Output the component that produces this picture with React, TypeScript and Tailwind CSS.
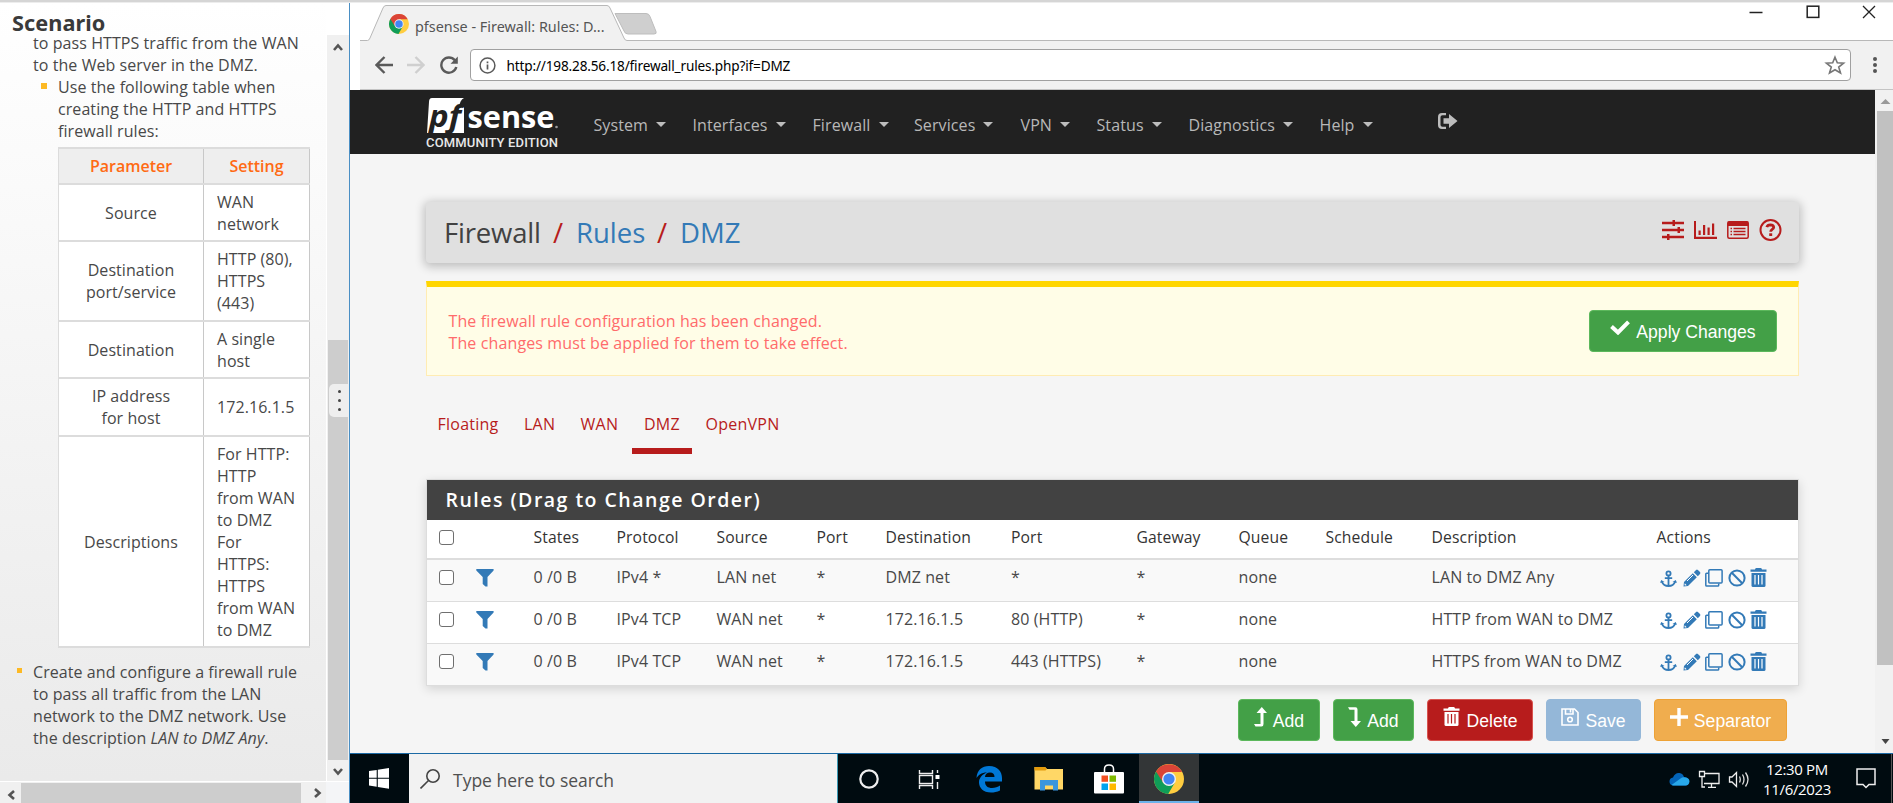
import React from 'react';

const openSans = "font-['Open_Sans','Noto_Sans',sans-serif]";
const arial = "font-['Liberation_Sans',Arial,sans-serif]";

function ChromeLogo({ size }: { size: number }) {
  return (
    <svg width={size} height={size} viewBox="0 0 30 30" className="block shrink-0">
      <circle cx="15" cy="15" r="15" fill="#ffcd40" />
      <path d="M15 15 L2.0 7.5 A15 15 0 0 0 14.2 30 L20.9 18.4 Z" fill="#0f9d58" />
      <path d="M2 7.5 A15 15 0 0 1 28.1 8 L15 8 L9 18.4 Z" fill="#db4437" />
      <circle cx="15" cy="15" r="7" fill="#f1f1f1" />
      <circle cx="15" cy="15" r="5.6" fill="#4285f4" />
    </svg>
  );
}

function AnchorIcon() {
  return (
    <svg width="17" height="18" viewBox="0 0 17 18" fill="none" stroke="#337ab7" strokeWidth="1.8">
      <circle cx="8.5" cy="3.4" r="2.1" />
      <path d="M8.5 5.5V16M4.8 8.2h7.4" />
      <path d="M1.8 11.6C3 14.500 5.500 16 8.500 16S14 14.500 15.200 11.600" />
      <path d="M0 12.800L1.300 10l3.200 2zM17 12.800L15.700 10l-3.200 2z" fill="#337ab7" stroke="none" />
    </svg>
  );
}

function PencilIcon() {
  return (
    <svg width="18" height="18" viewBox="0 0 18 18">
      <path d="M0.500 17.500L1 13L9.800 4.200L13.800 8.200L5 17Z" fill="#337ab7" />
      <path d="M10.800 3.200L13.100 0.900Q14 0.200 14.900 1L17 3.100Q17.800 4 17 4.900L14.800 7.200Z" fill="#337ab7" />
      <path d="M4 12L10 6" stroke="#fff" strokeWidth="1" />
      <path d="M1.800 14.300L3.700 16.200L2 16.500L1.500 16Z" fill="#fff" />
    </svg>
  );
}

function CloneIcon() {
  return (
    <svg width="18" height="18" viewBox="0 0 18 18" fill="none" stroke="#337ab7" strokeWidth="1.500">
      <rect x="3.800" y="0.800" width="13.300" height="13.300" rx="1" />
      <path d="M3.500 4.200H1.600Q0.800 4.200 0.800 5V16.200Q0.800 17.100 1.600 17.100H12.800Q13.700 17.100 13.700 16.300V14.500" />
    </svg>
  );
}

function BanIcon() {
  return (
    <svg width="18" height="18" viewBox="0 0 18 18" fill="none" stroke="#337ab7" strokeWidth="2">
      <circle cx="9" cy="9" r="7.600" />
      <path d="M3.800 3.800L14.200 14.200" />
    </svg>
  );
}

function TrashIcon({ color, bar }: { color: string; bar: string }) {
  return (
    <svg width="17" height="19" viewBox="0 0 17 19">
      <path d="M5 1.500Q5 0 6.300 0H10.700Q12 0 12 1.500H16.500V3.800H0.500V1.500Z" fill={color} />
      <path d="M1.500 5H15.500V17.500Q15.500 19 14 19H3Q1.500 19 1.500 17.500Z" fill={color} />
      <path d="M5 7V16.500M8.500 7V16.500M12 7V16.500" stroke={bar} strokeWidth="1.200" />
    </svg>
  );
}

function FilterIcon() {
  return (
    <svg width="18" height="18" viewBox="0 0 18 18">
      <path d="M0.300 0H17.600V1.500L11.500 8V17.500H9.500L6.700 15V8L0.300 1.500Z" fill="#337ab7" />
    </svg>
  );
}

function Checkbox() {
  return <div className="ml-px size-[15px] rounded-[3px] border border-[#6f6f6f] bg-white" />;
}

const params: { name: string[]; value: string[]; h: string }[] = [
  { name: ['Source'], value: ['WAN', 'network'], h: 'h-[57px]' },
  { name: ['Destination', 'port/service'], value: ['HTTP (80),', 'HTTPS', '(443)'], h: 'h-[80px]' },
  { name: ['Destination'], value: ['A single', 'host'], h: 'h-[57px]' },
  { name: ['IP address', 'for host'], value: ['172.16.1.5'], h: 'h-[58px]' },
  {
    name: ['Descriptions'],
    value: ['For HTTP:', 'HTTP', 'from WAN', 'to DMZ', 'For', 'HTTPS:', 'HTTPS', 'from WAN', 'to DMZ'],
    h: 'h-[211px]',
  },
];

function Lines({ lines }: { lines: string[] }) {
  return (
    <div>
      {lines.map((l, i) => (
        <div key={i} className="whitespace-nowrap">{l}</div>
      ))}
    </div>
  );
}

function Chevron({ d, className }: { d: string; className?: string }) {
  return (
    <svg width="10" height="10" viewBox="0 0 10 10" fill="none" stroke="#555" strokeWidth="2.600" className={className}>
      <path d={d} />
    </svg>
  );
}

function ScenarioPanel() {
  return (
    <div className="flex h-[800px] w-[349px] shrink-0 flex-col">
      <div className="flex min-h-0 flex-1">
        <div className={`${openSans} flex h-[778px] w-[326px] flex-col overflow-hidden bg-linear-to-b from-white to-[#eaeaea] text-[16px] leading-[22px] tracking-[0.070px] text-[#484848]`}>
          <h1 className="h-[30px] shrink-0 pt-[10px] pl-[12px] font-['Noto_Sans',sans-serif] text-[21.700px] leading-[20px] font-bold text-[#3a3a3a]">Scenario</h1>
          <div className="-mt-px pl-[33px]">
            <div className="whitespace-nowrap">to pass HTTPS traffic from the WAN</div>
            <div className="whitespace-nowrap">to the Web server in the DMZ.</div>
            <div className="flex">
              <div className="mt-[7px] mr-[11px] ml-[8px] size-[6px] shrink-0 bg-[#fdb924]" />
              <Lines lines={['Use the following table when', 'creating the HTTP and HTTPS', 'firewall rules:']} />
            </div>
            <div className="mt-[5px] ml-[25px] w-[252px] border-t-2 border-l border-[#dcdcdc] bg-white">
              <div className="flex h-[36px] border-b-2 border-[#dcdcdc] bg-[#eeeeee] font-semibold tracking-normal text-[#ff6a13]">
                <div className="flex w-[145px] items-center justify-center border-r border-[#c8c8c8]">Parameter</div>
                <div className="flex flex-1 items-center justify-center border-r border-[#c8c8c8]">Setting</div>
              </div>
              {params.map((p) => (
                <div key={p.name[0] + p.h} className={`flex ${p.h} border-b-2 border-[#dcdcdc]`}>
                  <div className="flex w-[145px] items-center justify-center border-r border-[#c8c8c8] text-center">
                    <Lines lines={p.name} />
                  </div>
                  <div className="flex flex-1 items-center border-r border-[#c8c8c8] pl-[13px]">
                    <Lines lines={p.value} />
                  </div>
                </div>
              ))}
            </div>
            <div className="mt-[13px] -ml-[16px] flex">
              <div className="mt-[7px] mr-[11px] size-[5px] shrink-0 bg-[#fdb924]" />
              <div className="whitespace-nowrap">
                Create and configure a firewall rule
                <br />
                to pass all traffic from the LAN
                <br />
                network to the DMZ network. Use
                <br />
                the description <i>LAN to DMZ Any</i>.
              </div>
            </div>
          </div>
        </div>
        <div className="flex h-[778px] w-[23px] flex-col">
          <div className="h-[32px] bg-white" />
          <div className="relative flex flex-1 flex-col items-center border-l border-white bg-[#f0f0f0]">
            <Chevron d="M1 8L5 3.500L9 8" className="mt-[7px]" />
            <div className="mt-[288px] h-[420px] w-[20px] bg-[#cdcdcd]" />
            <Chevron d="M1 2L5 6.500L9 2" className="mt-[7px]" />
            <div className="absolute top-[349px] left-[2px] flex h-[33px] w-[19px] flex-col items-center justify-center gap-[6px] rounded-l-[5px] bg-[#eeeeee] pl-[2px]">
              <i className="size-[3px] rounded-full bg-[#444]" />
              <i className="size-[3px] rounded-full bg-[#444]" />
              <i className="size-[3px] rounded-full bg-[#444]" />
            </div>
          </div>
        </div>
      </div>
      <div className="flex h-[22px] shrink-0 items-center border-t border-white bg-[#f0f0f0]">
        <Chevron d="M8 1L3.500 5L8 9" className="mx-[6px] mt-[5px]" />
        <div className="ml-[-1px] h-[20px] w-[280px] bg-[#cdcdcd]" />
        <Chevron d="M2 1L6.500 5L2 9" className="ml-[12px]" />
        <div className="ml-auto h-full w-[23px] bg-[#f4f5f7]" />
      </div>
    </div>
  );
}

function BrowserChrome() {
  return (
    <>
      <div className="relative h-[38px] shrink-0 bg-white">
        <svg width="1543" height="38" viewBox="0 0 1543 38" className="absolute inset-0">
          <path d="M265 10.500h31q3 0 4 3l6 15q1 2.500-2 2.500h-26q-3 0-4-3z" fill="#cfcfcf" stroke="#bdbdbd" />
          <path d="M10 37.500H17.500Q19 37.500 20 35L33 5Q34 2.500 36 2.500H257Q259 2.500 260 5L274 35Q275 37.500 277 37.500H1543V38H10Z" fill="#f1f1f1" />
          <path d="M10 37.500H17.500Q19 37.500 20 35L33 5Q34 2.500 36 2.500H257Q259 2.500 260 5L274 35Q275 37.500 277 37.500H1543" fill="none" stroke="#b8b8b8" />
          <g fill="none" stroke="#222" strokeWidth="1.500">
            <path d="M1399.500 9.500H1412.500" />
            <rect x="1457.200" y="3.200" width="11.600" height="11.200" />
            <path d="M1513 3L1525 15M1525 3L1513 15" strokeWidth="1.300" />
          </g>
        </svg>
        <div className="relative flex h-full items-center pt-[4px] pl-[39px]">
          <div className="-mt-[1px]"><ChromeLogo size={20} /></div>
          <span className="ml-[6px] pt-[5px] font-['Noto_Sans',sans-serif] text-[14.400px] text-[#555]">pfsense - Firewall: Rules: D...</span>
        </div>
      </div>
      <div className="ml-[10px] flex h-[49px] shrink-0 items-center border-b border-[#c4c4c4] bg-[#f1f1f1]">
        <svg width="18" height="18" viewBox="0 0 18 18" className="ml-[15px]" fill="none" stroke="#5a5a5a" strokeWidth="2.400">
          <path d="M18 9H2M9.500 1L1.500 9L9.500 17" />
        </svg>
        <svg width="18" height="18" viewBox="0 0 18 18" className="ml-[14px]" fill="none" stroke="#cfcfcf" strokeWidth="2.400">
          <path d="M0 9H16M8.500 1L16.500 9L8.500 17" />
        </svg>
        <svg width="18" height="18" viewBox="0 0 18 18" className="ml-[15px]">
          <path d="M14.800 4.200A7.600 7.600 0 1 0 16.300 11" fill="none" stroke="#5a5a5a" strokeWidth="2.400" />
          <path d="M17.800 0.500V7.800H10.500Z" fill="#5a5a5a" />
        </svg>
        <div className="ml-[12px] flex h-[32px] w-[1381px] items-center rounded-[4px] border border-[#a0a0a0] bg-white">
          <svg width="17" height="17" viewBox="0 0 17 17" className="ml-[8px]" fill="none" stroke="#5a5a5a" strokeWidth="1.500">
            <circle cx="8.500" cy="8.500" r="7.400" />
            <path d="M8.500 7.500V12.500M8.500 4.500V6.200" strokeWidth="1.700" />
          </svg>
          <span className="ml-[10.500px] pt-[2px] font-['Noto_Sans',sans-serif] text-[13.600px] tracking-[-0.160px] text-black">http://198.28.56.18/firewall_rules.php?if=DMZ</span>
          <svg width="22" height="20" viewBox="0 0 22 20" className="mr-[4px] ml-auto" fill="none" stroke="#777" strokeWidth="1.600">
            <path d="M11 2.200L13.300 7.800L19.600 8.200L14.700 12.100L16.500 18L11 14.700L5.500 18L7.300 12.100L2.400 8.200L8.700 7.800Z" />
          </svg>
        </div>
        <div className="ml-[21.500px] flex flex-col gap-[2px]">
          <i className="size-[4px] rounded-full bg-[#555]" />
          <i className="size-[4px] rounded-full bg-[#555]" />
          <i className="size-[4px] rounded-full bg-[#555]" />
        </div>
      </div>
    </>
  );
}

const menu: [string, string][] = [
  ['System', 'w-[99px]'],
  ['Interfaces', 'w-[120px]'],
  ['Firewall', 'w-[101.500px]'],
  ['Services', 'w-[106.500px]'],
  ['VPN', 'w-[76px]'],
  ['Status', 'w-[92px]'],
  ['Diagnostics', 'w-[131px]'],
  ['Help', 'w-[118px]'],
];

function Navbar() {
  return (
    <nav className="flex h-[64px] items-center bg-[#212121] pl-[76px]">
      <div className="w-[167.500px] pt-[1px]">
        <svg width="134" height="52" viewBox="0 0 134 52" className="block overflow-visible">
          <path d="M6 1H38Q34 3 33 10H38V36H1L3 5Q3 1 6 1Z" fill="#fff" />
          <text x="3" y="30" className="font-['Open_Sans',sans-serif] text-[30px] font-bold italic" fill="#212121" textLength="32" lengthAdjust="spacingAndGlyphs">pf</text>
          <text x="41.500" y="30.500" className="font-['Open_Sans',sans-serif] text-[31px] font-bold" fill="#fff" textLength="87" lengthAdjust="spacingAndGlyphs">sense</text>
          <circle cx="130.500" cy="30" r="1.300" fill="#999" />
          <text x="0" y="50" className="font-['Roboto',sans-serif] text-[13px] font-medium" fill="#e8e8e8" textLength="132">COMMUNITY EDITION</text>
        </svg>
      </div>
      {menu.map(([label, w]) => (
        <div key={label} className={`${openSans} ${w} flex shrink-0 items-center gap-[8px] pt-[6px] text-[16px] leading-[22px] tracking-[0.100px] text-[#b8b8b8]`}>
          {label}
          <i className="mt-[-2px] h-0 w-0 border-x-[5.500px] border-t-[5.500px] border-x-transparent border-t-[#bdbdbd]" />
        </div>
      ))}
      <svg width="20" height="17" viewBox="0 0 20 17" className="-mt-[2px]" fill="#bdbdbd">
        <path d="M8 0H4Q0 0 0 4V12Q0 16 4 16H8V13.800H4.500Q2.500 13.800 2.500 12V4Q2.500 2.200 4.500 2.200H8Z" />
        <path d="M5.500 5.200H11V1L19.500 8L11 15V10.800H5.500Z" />
      </svg>
    </nav>
  );
}

const colGrid = 'grid grid-cols-[38px_57.500px_83px_100px_100px_69px_125.500px_125.500px_102px_87px_106px_225px_1fr] pl-[11px]';
const heads = ['States', 'Protocol', 'Source', 'Port', 'Destination', 'Port', 'Gateway', 'Queue', 'Schedule', 'Description', 'Actions'];
const rules = [
  ['0 /0 B', 'IPv4 *', 'LAN net', '*', 'DMZ net', '*', '*', 'none', '', 'LAN to DMZ Any'],
  ['0 /0 B', 'IPv4 TCP', 'WAN net', '*', '172.16.1.5', '80 (HTTP)', '*', 'none', '', 'HTTP from WAN to DMZ'],
  ['0 /0 B', 'IPv4 TCP', 'WAN net', '*', '172.16.1.5', '443 (HTTPS)', '*', 'none', '', 'HTTPS from WAN to DMZ'],
];

function RulesTable() {
  return (
    <div className={`${openSans} mt-[25px] w-[1373px] border border-[#ddd] bg-white text-[16px] leading-[22px] tracking-[0.100px] whitespace-nowrap text-[#484848] shadow-[0_3px_10px_rgba(0,0,0,0.14)]`}>
      <div className="flex h-[40px] items-center bg-[#424242] pl-[18.500px] text-[19.500px] font-semibold tracking-[1.480px] text-white">Rules (Drag to Change Order)</div>
      <div className={`${colGrid} h-[40px] border-b-2 border-[#ddd] pt-[6px] text-[15.700px] font-medium tracking-[0.120px] text-[#333]`}>
        <div className="pt-[4px]"><Checkbox /></div>
        <div />
        {heads.map((h, i) => (
          <div key={i}>{h}</div>
        ))}
      </div>
      {rules.map((r, ri) => (
        <div key={ri} className={`${colGrid} h-[42px] border-b border-[#ddd] pt-[6px] last:h-[41px] last:border-b-0 ${ri === 1 ? 'bg-white' : 'bg-[#f9f9f9]'}`}>
          <div className="pt-[4px]"><Checkbox /></div>
          <div className="pt-[3px]"><FilterIcon /></div>
          {r.map((c, i) => (
            <div key={i}>{c}</div>
          ))}
          <div className="flex items-start pt-[3px] pl-[3px]">
            <div className="w-[23px] pt-px"><AnchorIcon /></div>
            <div className="w-[22px]"><PencilIcon /></div>
            <div className="w-[23px]"><CloneIcon /></div>
            <div className="w-[22px]"><BanIcon /></div>
            <div className="-mt-px"><TrashIcon color="#337ab7" bar="#fff" /></div>
          </div>
        </div>
      ))}
    </div>
  );
}

function Button({ icon, label, className }: { icon: React.ReactNode; label: string; className: string }) {
  return (
    <button className={`${arial} flex h-[42px] shrink-0 items-center justify-center rounded-[4px] border text-[17.600px] leading-none text-white ${className}`}>
      <span className="-mt-[7px] block">{icon}</span>
      <span className="mt-[3px]">{label}</span>
    </button>
  );
}

function Page() {
  return (
    <div className="flex min-h-0 flex-1">
      <div className="flex w-[1525px] shrink-0 flex-col overflow-hidden bg-[#f5f5f5]">
        <Navbar />
        <main className="pt-[48px] pl-[76px]">
          <div className={`${openSans} flex h-[61px] w-[1373px] items-center rounded-[4px] bg-[#e0e0e0] pr-[17px] pl-[18px] text-[27.500px] text-[#424242] shadow-[0_2px_10px_2px_rgba(0,0,0,0.22)]`}>
            <div className="mt-px flex">
              <span className="w-[109px] tracking-[-0.200px]">Firewall</span>
              <span className="w-[23px] text-[#b71c1c]">/</span>
              <span className="w-[81px] text-[#337ab7]">Rules</span>
              <span className="w-[23px] text-[#b71c1c]">/</span>
              <span className="text-[#337ab7]">DMZ</span>
            </div>
            <div className="-mt-[5px] ml-auto flex items-center gap-[10px]">
              <svg width="22" height="20" viewBox="0 0 22 20" fill="#b71c1c">
                <path d="M0 1.700H22V4.200H0ZM0 8.700H22V11.200H0ZM0 15.700H22V18.200H0Z" />
                <path d="M10.500 0H13V6H10.500ZM15.500 7H18V13H15.500ZM5 14H7.500V20H5Z" />
              </svg>
              <svg width="23" height="18" viewBox="0 0 23 18" fill="#b71c1c">
                <path d="M0 0H2V15.800H23V18H0ZM4.500 9.500H6.700V14H4.500ZM9 4H11.200V14H9ZM13.500 6.500H15.700V14H13.500ZM18 2.500H20.200V14H18Z" />
              </svg>
              <svg width="22" height="18" viewBox="0 0 22 18">
                <rect x="0.800" y="0.800" width="20.400" height="16.400" rx="1.500" fill="none" stroke="#b71c1c" strokeWidth="1.500" />
                <path d="M0.800 0.500H21.200V5H0.800Z" fill="#b71c1c" />
                <path d="M3.500 7.500H5M3.500 10.500H5M3.500 13.500H5M6.500 7.500H18.500M6.500 10.500H18.500M6.500 13.500H18.500" stroke="#b71c1c" strokeWidth="1.500" />
              </svg>
              <svg width="23" height="22" viewBox="0 0 23 22" fill="none" stroke="#b71c1c">
                <circle cx="11.500" cy="11" r="10" strokeWidth="2" />
                <path d="M7.800 8.200Q8.500 5.800 11.300 5.800Q14.600 5.900 14.700 8.300Q14.700 9.700 13 10.600Q11.700 11.400 11.700 12.800" strokeWidth="2.800" />
                <path d="M11.700 14.300V17" strokeWidth="3" />
              </svg>
            </div>
          </div>
          <div className={`${openSans} mt-[18px] flex h-[95px] w-[1373px] items-start border border-t-[6px] border-[#ffecb3] border-t-[#ffd600] bg-[#fffde7] pt-[23px] pr-[21px] pl-[21.500px] text-[16px] leading-[22px] tracking-[0.120px] text-[#ff6b6b]`}>
            <div>
              The firewall rule configuration has been changed.
              <br />
              The changes must be applied for them to take effect.
            </div>
            <Button
              className="ml-auto w-[188px] gap-[6px] border-[#5cb85c] bg-[#43a047] tracking-normal"
              label="Apply Changes"
              icon={
                <svg width="20" height="15" viewBox="0 0 20 15" fill="none" stroke="#fff" strokeWidth="4">
                  <path d="M1.500 6.500L8 12.500L18.500 1.800" />
                </svg>
              }
            />
          </div>
          <div className={`${openSans} mt-[37px] flex h-[41px] text-[16px] leading-[22px] tracking-[0.250px] text-[#b71c1c]`}>
            <div className="w-[87px] pl-[11.500px]">Floating</div>
            <div className="w-[56px] pl-[11px]">LAN</div>
            <div className="w-[63px] pl-[11.500px]">WAN</div>
            <div className="w-[60px] border-b-[6px] border-[#b71c1c] pl-[12px]">DMZ</div>
            <div className="pl-[13.500px]">OpenVPN</div>
          </div>
          <RulesTable />
          <div className="mt-[13px] flex gap-[13px] pl-[812px]">
            <Button className="w-[82px] gap-[6px] border-[#5cb85c] bg-[#43a047]" label="Add" icon={
              <svg width="13" height="20" viewBox="0 0 13 20" fill="#fff"><path d="M6.500 19.500V6H2.500L7.800 0L13 6H9.500V17Q9.500 19.500 7.500 19.500H1.500L0 17H6.500Z" /></svg>
            } />
            <Button className="w-[81px] gap-[6px] border-[#5cb85c] bg-[#43a047]" label="Add" icon={
              <svg width="13" height="20" viewBox="0 0 13 20" fill="#fff"><path d="M6.500 2.800H1.500L0 0.300H7.500Q9.500 0.300 9.500 2.500V14H13L7.800 20L2.500 14H6.500Z" /></svg>
            } />
            <Button className="w-[106px] gap-[7px] border-[#d9534f] bg-[#b71c1c]" label="Delete" icon={<TrashIcon color="#fff" bar="#b71c1c" />} />
            <Button className="w-[95px] gap-[6px] border-[#94b7d8] bg-[#94b7d8]" label="Save" icon={
              <svg width="18" height="18" viewBox="0 0 18 18" fill="none" stroke="#fff" strokeWidth="1.600"><path d="M1 1H13.500L17 4.500V17H1ZM4.500 1V6H12V1M9.500 1.500V4.500" /><circle cx="9" cy="11.500" r="2.300" /></svg>
            } />
            <Button className="w-[133px] gap-[6px] border-[#eea236] bg-[#f0ad4e]" label="Separator" icon={
              <svg width="18" height="18" viewBox="0 0 18 18" fill="none" stroke="#fff" strokeWidth="3.400"><path d="M9 0V18M0 9H18" /></svg>
            } />
          </div>
        </main>
      </div>
      <div className="flex w-[18px] flex-col items-end bg-[#f1f1f1]">
        <svg width="18" height="21" viewBox="0 0 18 21" className="shrink-0"><path d="M5.500 14L10.500 9L15.500 14Z" fill="#999" /></svg>
        <div className="h-[554px] w-[16px] bg-[#c1c1c1]" />
        <svg width="18" height="20" viewBox="0 0 18 20" className="mt-auto mb-[2px]"><path d="M6.500 8L10.500 13L14.500 8Z" fill="#444" /></svg>
      </div>
    </div>
  );
}

function Taskbar() {
  return (
    <div className="flex h-[50px] shrink-0 border-t border-[#1c6aa5] bg-[#000b10]">
      <div className="flex w-[59px] items-center pl-[19px]">
        <svg width="20" height="21" viewBox="0 0 20 21" fill="#fff" className="-mt-[1px]">
          <path d="M0 3L7.700 1.900V9.700H0ZM8.800 1.700L20 0V9.700H8.800ZM0 10.800H7.700V18.700L0 17.600ZM8.800 10.800H20V20.800L8.800 19Z" />
        </svg>
      </div>
      <div className="flex w-[429px] items-center border-r border-[#3a9ab5] bg-[#f2f2f2]">
        <svg width="20" height="20" viewBox="0 0 20 20" className="ml-[11px]" fill="none" stroke="#444" strokeWidth="1.600">
          <circle cx="13" cy="7" r="6.200" />
          <path d="M8.500 11.500L0.500 19.500" />
        </svg>
        <span className={`${openSans} ml-[13px] pt-[4px] text-[17.500px] text-[#505050]`}>Type here to search</span>
      </div>
      <svg width="301" height="49" viewBox="0 0 301 49" className="shrink-0">
        <circle cx="31" cy="25" r="8.700" fill="none" stroke="#eee" strokeWidth="2.200" />
        <g fill="none" stroke="#eee" strokeWidth="1.400">
          <path d="M81.500 16V19.500H94.500V16M81.500 35V31.500H94.500V35" />
          <rect x="81.500" y="21.500" width="13" height="8" />
          <path d="M99.500 16V35" strokeDasharray="3 2 0 7 12" />
        </g>
        <rect x="97.500" y="21" width="4" height="4" fill="#fff" />
        <path d="M138.500 24C139 16 144 12 151 12C160 12 164 18 164 24V27.500H147C147 32 150 34 154 34C157 34 160 33 162 31.500V36.500C159 38 156 38.500 153 38.500C145 38.500 141 33.500 141 28.500C141 24 144 20.500 149 18.500C143 18.500 140.500 21 138.500 24ZM147 23H156.500C156.500 20 155 18.500 152 18.500S147 20.500 147 23Z" fill="#0078d7" fillRule="evenodd" />
        <path d="M196.500 13H207L209 15H225V35.500H196.500Z" fill="#ffd766" />
        <path d="M196.500 13H207L209 15L207.500 16.500H196.500Z" fill="#e39b0c" />
        <path d="M202 26H220V36.500H215V31.500H207V36.500H202Z" fill="#3a96dd" />
        <path d="M266.500 18V15Q266.500 11 271 11Q275.500 11 275.500 15V18" fill="none" stroke="#fff" strokeWidth="1.500" />
        <rect x="256" y="18" width="30" height="21.500" rx="1" fill="#fff" />
        <path d="M263.500 21.500H270V27.800H263.500Z" fill="#f25022" />
        <path d="M271.500 21.500H278V27.800H271.500Z" fill="#7fba00" />
        <path d="M263.500 29.500H270V36H263.500Z" fill="#00a4ef" />
        <path d="M271.500 29.500H278V36H271.500Z" fill="#ffb900" />
      </svg>
      <div className="flex w-[60px] shrink-0 items-center justify-center border-b-2 border-[#6cb2ea] bg-[#333637] pt-[2px]">
        <ChromeLogo size={30} />
      </div>
      <div className="ml-auto flex items-center text-white">
        <svg width="82" height="20" viewBox="0 0 82 20" fill="none">
          <path d="M4 16.500Q0.500 16 0.500 12.500T4 8.500Q6 3.500 10.500 4Q14 4.500 15 8Q20 8 20 12.500Q19.500 16.500 16.500 16.500Z" fill="#0364b8" />
          <path d="M2.500 16L11.500 9.500Q13 8.300 15 8.200Q20.500 8.500 20.500 12.500Q20 16.500 16.500 16.500H4Z" fill="#28a8ea" />
          <path d="M36 4.500H50V14.500H35M30.500 2.500H35.500V7.500H30.500ZM33 7.500V18H36M42.500 14.500V18M39 18.300H47" stroke="#eee" strokeWidth="1.300" />
          <path d="M60.500 8H63L67.500 3.500V17.500L63 13H60.500Z" stroke="#eee" strokeWidth="1.300" />
          <path d="M70.500 7.500Q72 10.500 70.500 13.500M73.500 5.500Q76.500 10.500 73.500 15.500M76.500 3.500Q81.500 10.500 76.500 17.500" stroke="#ddd" strokeWidth="1.300" />
        </svg>
        <div className="ml-[12px] w-[68px] text-center font-['Open_Sans',sans-serif] text-[15px] leading-[20px] tracking-[-0.350px] whitespace-nowrap">
          <div>12:30 PM</div>
          <div>11/6/2023</div>
        </div>
        <svg width="20" height="22" viewBox="0 0 20 22" className="ml-[25px]" fill="none" stroke="#eee" strokeWidth="1.500">
          <path d="M1 1H19V16.500H13L10 19.500L7 16.500H1Z" />
        </svg>
        <div className="ml-[15px] h-[49px] w-[2px] border-l border-[#555]" />
      </div>
    </div>
  );
}

export default function App() {
  return (
    <div className="flex h-[803px] w-[1893px] flex-col overflow-hidden bg-white">
      <div className="h-[3px] shrink-0 border-b border-[#ededed] bg-[#d5d5d5]" />
      <div className="flex">
        <ScenarioPanel />
        <div className="flex h-[800px] w-[1544px] flex-col border-l border-[#4a8fc4]">
          <BrowserChrome />
          <Page />
          <Taskbar />
        </div>
      </div>
    </div>
  );
}
